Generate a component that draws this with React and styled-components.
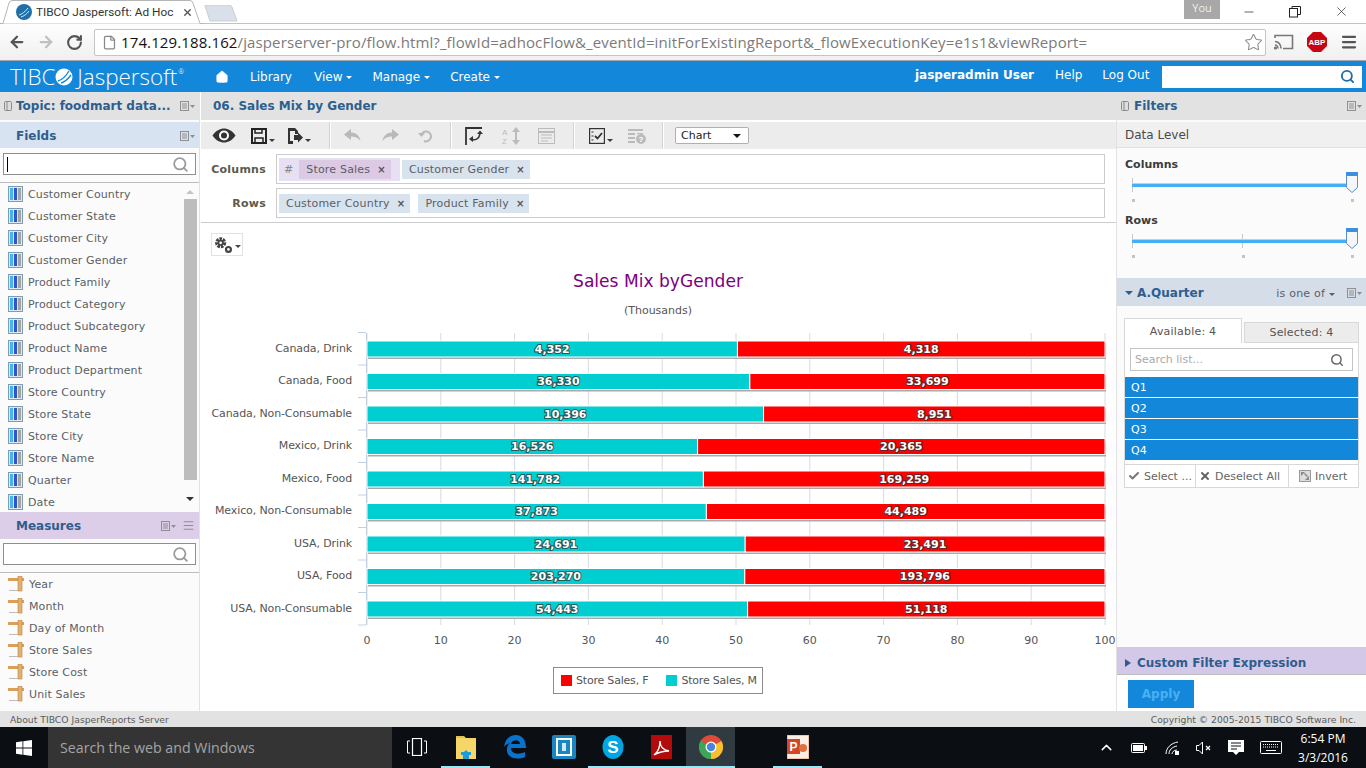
import React from "react";
import styled, { createGlobalStyle } from "styled-components";
import { Search, RotateCw, ArrowLeft, ArrowRight, Star, File, Check, X, Menu, Minus, ChevronUp, Home } from "lucide-react";

const UI = `"DejaVu Sans", Verdana, sans-serif`;
const WIN = `"Open Sans", "Noto Sans", sans-serif`;

const GlobalStyle = createGlobalStyle`
  html, body { margin: 0; padding: 0; background: #fff; overflow: hidden; }
  * { box-sizing: border-box; }
`;

const Page = styled.div`
  width: 1366px;
  height: 768px;
  display: flex;
  flex-direction: column;
  overflow: hidden;
  font-family: ${UI};
  font-size: 11px;
  color: #5a5f66;
`;

/* browser chrome */
const TabStrip = styled.div`
  height: 24px;
  display: flex;
  align-items: flex-start;
  background: #fff;
  border-bottom: 1px solid #c2c2c2;
`;
const Tab = styled.div`
  position: relative;
  width: 204px;
  height: 24px;
  display: flex;
  align-items: center;
  padding-left: 16px;
  font: 11.8px Roboto, sans-serif;
  color: #333;
`;
const TabShape = styled.svg`
  position: absolute;
  left: 0;
  top: 0;
`;
const TabTitle = styled.span`
  position: relative;
  width: 140px;
  margin-left: 4px;
  white-space: nowrap;
`;
const TabClose = styled.span`
  position: relative;
  margin-left: 6px;
  display: flex;
  color: #555;
`;
const NewTab = styled.svg`
  margin-top: 5px;
`;
const WindowArea = styled.div`
  margin-left: auto;
  padding-right: 2px;
  display: flex;
  align-items: flex-start;
`;
const YouBadge = styled.div`
  width: 36px;
  height: 19px;
  background: #a8a8a8;
  color: #eee;
  font: 11px ${WIN};
  text-align: center;
  margin-right: 6px;
`;
const WinButton = styled.div`
  width: 46px;
  height: 23px;
  display: flex;
  align-items: center;
  justify-content: center;
  color: #222;
`;
const BrowserBar = styled.div`
  height: 37px;
  display: flex;
  align-items: center;
  padding: 0 5px 0 2px;
  background: linear-gradient(#fefefe, #f0f0f0);
  border-bottom: 1px solid #a8a8a8;
`;
const NavGlyph = styled.span`
  width: 29px;
  display: flex;
  justify-content: center;
  color: ${(p) => p.color || "#555"};
`;
const UrlBox = styled.div`
  width: 1172px;
  height: 27px;
  margin-left: 5px;
  display: flex;
  align-items: center;
  padding: 0 2px 0 7px;
  background: #fff;
  border: 1px solid #c4c4c4;
  border-radius: 2px;
`;
const UrlText = styled.div`
  flex: 1;
  margin-left: 4px;
  font: 15px ${WIN};
  color: #7b7b7b;
  white-space: nowrap;
  letter-spacing: 0.12px;
  b { font-weight: 400; color: #111; }
`;
const BarTools = styled.div`
  display: flex;
  align-items: center;
  margin-left: 3px;
  flex: 1;
  justify-content: space-between;
  padding: 0 3px 0 5px;
`;
const AbpBadge = styled.div`
  width: 20px;
  height: 20px;
  display: flex;
  align-items: center;
  justify-content: center;
  background: #c8060f;
  clip-path: polygon(30% 0, 70% 0, 100% 30%, 100% 70%, 70% 100%, 30% 100%, 0 70%, 0 30%);
  color: #fff;
  font: bold 8px "Liberation Sans", sans-serif;
`;

/* app nav */
const NavBar = styled.div`
  height: 31px;
  display: flex;
  align-items: center;
  background: #1387d9;
  color: #fff;
  font-size: 12px;
`;
const Logo = styled.div`
  width: 215px;
  padding-left: 10px;
  display: flex;
  align-items: center;
  font: 300 22.4px "Open Sans", sans-serif;
  white-space: nowrap;
  sup {
    font-size: 7px;
    margin: -10px 0 0 1px;
  }
`;
const NavLink = styled.span`
  margin-left: ${(p) => p.$gap || 0}px;
  margin-bottom: ${(p) => (p.$raised ? 3 : 0)}px;
  font-weight: ${(p) => (p.$bold ? 700 : 400)};
  display: flex;
  align-items: center;
  white-space: nowrap;
`;
const Caret = styled.i`
  display: inline-block;
  margin: ${(p) => p.$margin || "2px 0 0 4px"};
  border-left: ${(p) => p.$size || 3}px solid transparent;
  border-right: ${(p) => p.$size || 3}px solid transparent;
  border-top: ${(p) => p.$size || 3}px solid ${(p) => p.$color || "currentColor"};
`;
const SideCaret = styled.i`
  margin-right: 6px;
  border-top: 4px solid transparent;
  border-bottom: 4px solid transparent;
  border-left: 6px solid #2e5e8e;
`;
const NavSearch = styled.div`
  width: 200px;
  height: 22px;
  margin-left: 13px;
  background: #fff;
  display: flex;
  align-items: center;
  justify-content: flex-end;
  padding-right: 7px;
  color: #1b6ea8;
`;

/* three columns */
const Main = styled.div`
  flex: 1;
  min-height: 0;
  display: flex;
  background: #fff;
`;
const LeftPanel = styled.div`
  width: 200px;
  display: flex;
  flex-direction: column;
  background: #fbfbfb;
  border-right: 1px solid #e2e2e2;
`;
const CenterPanel = styled.div`
  width: 916px;
  display: flex;
  flex-direction: column;
  border-left: 1px solid #fff;
`;
const RightPanel = styled.div`
  width: 250px;
  display: flex;
  flex-direction: column;
  background: #fbfbfb;
  border-left: 1px solid #e2e2e2;
`;
const PanelHead = styled.div`
  height: ${(p) => p.$h || 28}px;
  flex: none;
  display: flex;
  align-items: center;
  padding: ${(p) => p.$drop || 0}px ${(p) => p.$right ?? 4}px 0 ${(p) => p.$left ?? 4}px;
  background: ${(p) => p.$bg || "#e2e2e2"};
  margin-top: ${(p) => p.$top || 0}px;
  font-weight: 700;
  font-size: 12px;
  color: #2e5e8e;
  white-space: nowrap;
`;
const HeadTitle = styled.span`
  flex: 1;
  margin-left: ${(p) => p.$left || 0}px;
`;
const SearchInput = styled.div`
  height: 22px;
  margin: ${(p) => p.$margin};
  display: flex;
  align-items: center;
  justify-content: space-between;
  padding: 0 6px 0 3px;
  background: #fff;
  border: 1px solid #8f8f8f;
  color: #9a9a9a;
`;
const TextCursor = styled.i`
  width: 1px;
  height: 15px;
  background: #000;
`;
const FieldsBody = styled.div`
  height: 330px;
  flex: none;
  display: flex;
  border-top: 1px solid #bdbdbd;
  margin-top: 7px;
  overflow: hidden;
`;
const FieldList = styled.div`
  flex: 1;
`;
const FieldRow = styled.div`
  height: 22px;
  display: flex;
  align-items: center;
  gap: 5px;
  padding-left: 8px;
  white-space: nowrap;
  letter-spacing: 0.13px;
`;
const Scrollbar = styled.div`
  width: 14px;
  margin-right: 2px;
  display: flex;
  flex-direction: column;
  align-items: center;
`;
const ScrollArrow = styled.i`
  flex: none;
  margin: ${(p) => p.$margin};
  border-left: 4px solid transparent;
  border-right: 4px solid transparent;
  ${(p) => (p.$up ? "border-bottom: 4px solid #c4c4c4;" : "border-top: 4px solid #333;")}
`;
const ScrollThumb = styled.div`
  width: 13px;
  height: 281px;
  background: #bdbdbd;
`;
const MeasureBody = styled.div`
  flex: 1;
  min-height: 0;
  margin-top: 7px;
  border-top: 1px solid #bdbdbd;
`;
const SmallMenu = styled(Menu)`
  margin-left: 6px;
`;

/* center toolbar and pivot rows */
const Toolbar = styled.div`
  height: 27px;
  flex: none;
  margin-top: 2px;
  display: flex;
  align-items: center;
  background: #ececec;
  color: #333;
`;
const ToolBtn = styled.span`
  width: ${(p) => p.$w}px;
  flex: none;
  display: flex;
  align-items: center;
  justify-content: center;
  color: ${(p) => (p.$off ? "#b9b9b9" : "#3a3a3a")};
`;
const ToolSep = styled.i`
  width: 1px;
  height: 27px;
  flex: none;
  background: #fff;
  box-shadow: -1px 0 0 #d4d4d4;
`;
const ChartSelect = styled.div`
  width: 74px;
  height: 17px;
  margin-left: 11px;
  display: flex;
  align-items: center;
  justify-content: space-between;
  padding: 0 7px 0 5px;
  background: #fff;
  border: 1px solid #b0b0b0;
  border-radius: 2px;
  color: #222;
  font-size: 11px;
`;
const PivotRow = styled.div`
  display: flex;
  align-items: center;
  height: 30px;
  margin-top: ${(p) => p.$top}px;
`;
const PivotLabel = styled.div`
  width: 65px;
  text-align: right;
  font-weight: 700;
  color: #5d5b4c;
  font-size: 11px;
  letter-spacing: 0.25px;
`;
const PivotBox = styled.div`
  width: 829px;
  height: 30px;
  margin-left: 10px;
  display: flex;
  align-items: center;
  gap: 2px;
  padding-left: 2px;
  border: 1px solid #ccc;
`;
const MeasureGroup = styled.div`
  height: 23px;
  display: flex;
  align-items: center;
  padding: 0 9px 0 5px;
  background: #e6e0f2;
  color: #888;
  font-style: italic;
`;
const Pill = styled.div`
  height: 19px;
  margin-left: ${(p) => p.$left || 0}px;
  margin-right: ${(p) => p.$right || 0}px;
  display: flex;
  align-items: center;
  gap: 7px;
  padding: 0 5px 0 7px;
  font-style: normal;
  letter-spacing: 0.2px;
  background: ${(p) => (p.$inner ? "#dcc9e4" : "#d8e3ee")};
  color: #5a5f66;
  white-space: nowrap;
`;
const PillX = styled.b`
  font-size: 10px;
  color: #555;
`;
const CanvasArea = styled.div`
  flex: 1;
  min-height: 0;
  margin-top: 4px;
  border-top: 1px solid #ccc;
  display: flex;
  flex-direction: column;
`;
const GearBtn = styled.div`
  width: 32px;
  height: 23px;
  margin: 10px 0 6px 10px;
  display: flex;
  align-items: center;
  justify-content: center;
  border: 1px solid #e2e2e2;
  color: #444;
`;
const ChartSvg = styled.svg`
  display: block;
  font-family: ${UI};
`;
const ChartTitle = styled.text`
  fill: #7c007c;
  font-size: 17.1px;
  text-anchor: middle;
`;
const ChartSub = styled.text`
  fill: #555;
  font-size: 11px;
  text-anchor: middle;
`;
const CatLabel = styled.text`
  fill: #555;
  font-size: 11px;
  letter-spacing: -0.12px;
  text-anchor: end;
`;
const AxisLabel = styled.text`
  fill: #555;
  font-size: 11px;
  text-anchor: middle;
`;
const BarValue = styled.text`
  fill: #fff;
  font-size: 11px;
  font-weight: 700;
  text-anchor: middle;
  stroke: #333;
  stroke-width: 2.2px;
  stroke-opacity: 0.75;
  paint-order: stroke;
`;
const Legend = styled.div`
  width: 210px;
  height: 27px;
  margin: 10px 0 0 352px;
  display: flex;
  align-items: center;
  gap: 18px;
  padding-left: 7px;
  border: 1px solid #8c8c8c;
  color: #555;
  letter-spacing: -0.2px;
`;
const LegendItem = styled.div`
  display: flex;
  align-items: center;
  gap: 4px;
  white-space: nowrap;
  &::before {
    content: "";
    width: 11px;
    height: 11px;
    background: ${(p) => p.$color};
  }
`;

/* filters */
const DataLevel = styled.div`
  height: 26px;
  flex: none;
  display: flex;
  align-items: center;
  margin-top: 2px;
  padding-left: 8px;
  background: #f0f0f0;
  border-bottom: 1px solid #e0e0e0;
  font-size: 12px;
  color: #4a4a4a;
`;
const SliderLabel = styled.div`
  margin: ${(p) => p.$top}px 0 0 8px;
  font-weight: 700;
  color: #3c3c3c;
  font-size: 11px;
`;
const SliderTrack = styled.div`
  position: relative;
  height: 27px;
  margin: 7px 0 0 15px;
  width: 220px;
`;
const TrackLine = styled.div`
  position: absolute;
  left: 0;
  right: 0;
  top: 5px;
  height: 4px;
  background: #45aef5;
  border-top: 1px solid #a6d8f8;
`;
const TickLine = styled.i`
  position: absolute;
  left: ${(p) => p.$x}px;
  top: 0;
  width: 1px;
  height: 14px;
  background: #c8c8c8;
`;
const TickDot = styled.i`
  position: absolute;
  left: ${(p) => p.$x}px;
  top: 21px;
  width: 3px;
  height: 3px;
  background: #c4c4c4;
`;
const SliderThumb = styled.span`
  position: absolute;
  left: 214px;
  top: -6px;
  display: flex;
`;
const IsOneOf = styled.span`
  display: flex;
  align-items: center;
  font-weight: 400;
  font-size: 11px;
  letter-spacing: 0.2px;
  color: #5a5f66;
  margin-right: 12px;
`;
const PickBox = styled.div`
  margin: 12px 7px 0 7px;
  display: flex;
  flex-direction: column;
`;
const TabRow = styled.div`
  display: flex;
  align-items: flex-end;
  height: 25px;
`;
const PickTab = styled.div`
  height: ${(p) => (p.$active ? 25 : 21)}px;
  width: ${(p) => (p.$active ? 118 : 115)}px;
  margin-left: ${(p) => (p.$active ? 0 : 2)}px;
  display: flex;
  align-items: center;
  justify-content: center;
  border: 1px solid #d8d8d8;
  border-bottom: ${(p) => (p.$active ? "none" : "1px solid #d8d8d8")};
  background: ${(p) => (p.$active ? "#fff" : "#ececec")};
  color: #555;
  letter-spacing: 0.2px;
`;
const PickBody = styled.div`
  background: #fff;
  border: 1px solid #d8d8d8;
  border-top: none;
`;
const PickSearch = styled.div`
  height: 23px;
  margin: 5px 5px 6px 5px;
  display: flex;
  align-items: center;
  justify-content: space-between;
  padding: 0 8px 0 4px;
  border: 1px solid #c4c4c4;
  color: #aaa;
`;
const QuarterItem = styled.div`
  height: 20px;
  margin-bottom: 1px;
  display: flex;
  align-items: center;
  padding-left: 6px;
  background: #1387d9;
  color: #fff;
`;
const PickActions = styled.div`
  height: 23px;
  margin-top: 4px;
  display: flex;
  border-top: 1px solid #d8d8d8;
`;
const PickAction = styled.div`
  width: ${(p) => p.$w}px;
  display: flex;
  align-items: center;
  gap: 4px;
  padding-left: ${(p) => p.$pad || 3}px;
  white-space: nowrap;
  overflow: hidden;
  color: #666;
  font-size: 11px;
  & + & { border-left: 1px solid #d8d8d8; }
`;
const Spacer = styled.div`
  flex: 1;
`;
const CustomHead = styled(PanelHead)`
  border-bottom: 1px solid #bdbdbd;
`;
const ApplyRow = styled.div`
  height: 36px;
  flex: none;
  padding: 5px 0 0 11px;
  background: #fff;
`;
const ApplyBtn = styled.div`
  width: 66px;
  height: 28px;
  display: flex;
  align-items: center;
  justify-content: center;
  background: #1387d9;
  color: #4ab0f2;
  font-weight: 700;
  font-size: 12px;
`;

/* footer and taskbar */
const Footer = styled.div`
  height: 16px;
  flex: none;
  display: flex;
  align-items: center;
  justify-content: space-between;
  padding: 0 10px;
  background: #e2e2e2;
  font-size: 9.25px;
  color: #5a5a5a;
`;
const Taskbar = styled.div`
  height: 41px;
  flex: none;
  display: flex;
  align-items: stretch;
  background: #0b0f14;
  color: #fff;
`;
const StartBtn = styled.div`
  width: 48px;
  display: flex;
  align-items: center;
  justify-content: center;
`;
const TaskSearch = styled.div`
  width: 344px;
  display: flex;
  align-items: center;
  padding-left: 12px;
  background: #343434;
  color: #a4a4a4;
  font: 14.2px ${WIN};
`;
const TaskItem = styled.div`
  width: ${(p) => p.$w || 49}px;
  margin-left: ${(p) => p.$left || 0}px;
  display: flex;
  align-items: center;
  justify-content: center;
  background: ${(p) => (p.$active ? "#2f3b40" : "transparent")};
  border-bottom: 2px solid ${(p) => (p.$open ? "#9be6f7" : "transparent")};
`;
const Tray = styled.div`
  margin-left: auto;
  display: flex;
  align-items: center;
`;
const TrayIcon = styled.span`
  width: ${(p) => p.$w}px;
  display: flex;
  justify-content: center;
`;
const Clock = styled.div`
  width: 62px;
  margin: 0 12px 0 4px;
  text-align: center;
  font: 12px/19px ${WIN};
`;

/* drawn icons */
const FieldIcon = () => (
  <svg width="15" height="16" viewBox="0 0 15 16">
    <rect x="0.5" y="0.5" width="14" height="15" fill="#dfe8f0" stroke="#7d9db5" />
    <rect x="2" y="2" width="3" height="12" fill="#45b4f5" />
    <rect x="6" y="2" width="3" height="12" fill="#2f55c9" />
    <rect x="10" y="2" width="3" height="12" fill="#a5a5a5" />
  </svg>
);
const MeasureIcon = () => (
  <svg width="16" height="16" viewBox="0 0 16 16">
    <rect x="0" y="2" width="16" height="3" fill="#d9a05a" />
    <rect x="10" y="0" width="4" height="15" fill="#e2b06f" stroke="#b98443" strokeWidth="0.6" />
    <rect x="1" y="14" width="9" height="1" fill="#bbb" />
  </svg>
);
const PanelMenu = () => (
  <svg width="15" height="10" viewBox="0 0 15 10" fill="none" stroke="#8f8f8f">
    <rect x="0.5" y="0.5" width="8" height="9" />
    <path d="M2 3h5M2 5h5M2 7h5" />
    <path d="M10 4h5l-2.5 3z" fill="#8f8f8f" stroke="none" />
  </svg>
);
const PinIcon = () => (
  <svg width="8" height="10" viewBox="0 0 8 10" fill="#ddd" stroke="#8a8a8a">
    <rect x="0.5" y="0.5" width="7" height="9" rx="1" />
    <path d="M3 1v8" />
  </svg>
);
const EyeIcon = () => (
  <svg width="24" height="15" viewBox="0 0 24 15">
    <path d="M0.5 7.5C4 2.5 8 0.5 12 0.5s8 2 11.5 7c-3.500 5-7.500 7-11.500 7S4 12.500 0.500 7.500z" fill="#333" />
    <circle cx="12" cy="7.500" r="5" fill="#fff" />
    <circle cx="12" cy="7.500" r="3" fill="#333" />
  </svg>
);
const SaveIcon = () => (
  <svg width="16" height="16" viewBox="0 0 16 16" fill="none" stroke="#222" strokeWidth="2">
    <rect x="1" y="1" width="14" height="14" />
    <path d="M4 1v4h7V1M4 15v-5h8v5" strokeWidth="1.500" />
  </svg>
);
const ExportIcon = () => (
  <svg width="16" height="16" viewBox="0 0 16 16" fill="#333">
    <path d="M1 0h7l3 3v3H8V3H3v10h3v3H1z" />
    <path d="M7 7h4V4.500L16 9.500 11 14.500V12H7z" />
  </svg>
);
const UndoIcon = ({ flip }) => (
  <svg width="18" height="13" viewBox="0 0 18 13" fill="#b9b9b9" transform={flip ? "scale(-1 1)" : undefined}>
    <path d="M7 0L0 5.500 7 11V7.500c4 0 7 1 9.500 4.500C15.500 6.500 12 3.500 7 3.500z" />
  </svg>
);
const UndoAllIcon = () => (
  <svg width="14" height="14" viewBox="0 0 14 14" fill="none" stroke="#b9b9b9" strokeWidth="2">
    <path d="M3 7a5 5 0 1 1 3 5" />
    <path d="M0 4l3.500 4L7 4z" fill="#b9b9b9" stroke="none" />
  </svg>
);
const PivotIcon = () => (
  <svg width="20" height="20" viewBox="0 0 20 20" fill="none" stroke="#333" strokeWidth="1.800">
    <path d="M1 19V2h16" />
    <path d="M6 13c4 2 8 0 9-5" strokeWidth="1.500" />
    <path d="M12 8h6l-3-3.500zM8 10v6l-4-3z" fill="#333" stroke="none" />
  </svg>
);
const SortIcon = () => (
  <svg width="20" height="18" viewBox="0 0 20 18" fill="#bbb">
    <text x="0" y="8" fontSize="8" fontFamily="Liberation Sans">A</text>
    <text x="0" y="17" fontSize="8" fontFamily="Liberation Sans">Z</text>
    <path d="M14 0l4 5h-3v8h3l-4 5-4-5h3V5h-3z" />
  </svg>
);
const TableIcon = () => (
  <svg width="17" height="16" viewBox="0 0 17 16" fill="none" stroke="#bbb">
    <rect x="0.500" y="0.500" width="16" height="15" />
    <path d="M1 4h15" strokeWidth="2" />
    <path d="M3 7h11M3 10h11M3 13h7" />
  </svg>
);
const ChecklistIcon = () => (
  <svg width="16" height="16" viewBox="0 0 16 16" fill="none" stroke="#333">
    <rect x="0.500" y="0.500" width="15" height="15" strokeWidth="1.400" />
    <path d="M2.500 4h2M2.500 8h2M2.500 12h2" />
    <path d="M6 8l2.500 2.500L13 5" strokeWidth="1.800" />
  </svg>
);
const QueryIcon = () => (
  <svg width="19" height="16" viewBox="0 0 19 16">
    <path d="M0 1h15v2H0zM0 5h7v2H0zM9 5h6v1H9zM0 9h7v2H0zM0 13h7v2H0z" fill="#bbb" />
    <circle cx="13" cy="11" r="5" fill="#bbb" />
    <text x="13" y="14" fontSize="8" fontWeight="700" textAnchor="middle" fill="#fff" fontFamily="Liberation Sans">?</text>
  </svg>
);
const GearsIcon = () => (
  <svg width="20" height="18" viewBox="0 0 18 16" fill="none" stroke="#444">
    <circle cx="6" cy="6" r="3.500" strokeWidth="3" strokeDasharray="2.200 0.800" />
    <circle cx="6" cy="6" r="2" strokeWidth="1.500" />
    <circle cx="13" cy="12" r="2.200" strokeWidth="2" />
  </svg>
);
const TibcoBall = () => (
  <svg width="18" height="18" viewBox="0 0 18 18">
    <circle cx="9" cy="9" r="8.500" fill="#fff" />
    <path d="M3 13C7 12 11 8 14 3M6 15c4-1 7-4 10-8" stroke="#1387d9" strokeWidth="1.300" fill="none" />
  </svg>
);
const LogoMark = styled.span`
  display: flex;
  margin: 0 4px 0 0;
`;
const TibcoFavicon = () => (
  <svg width="16" height="16" viewBox="0 0 16 16">
    <circle cx="8" cy="8" r="8" fill="#1f6fa8" />
    <path d="M3 11c3-1 6-3 9-7M5 13c3-1 6-3 8-6" stroke="#d6ecfa" fill="none" />
  </svg>
);
const FaviconWrap = styled.span`
  position: relative;
  display: flex;
`;
const CastIcon = () => (
  <svg width="20" height="16" viewBox="0 0 20 16" fill="none" stroke="#777" strokeWidth="1.600">
    <path d="M1 4V1.500h17.500v13H9" />
    <path d="M1 7.500c3.500 0 6 3 6 7M1 11c1.500 0 3 1.500 3 3.500" />
    <circle cx="1.500" cy="14" r="0.800" fill="#777" />
  </svg>
);
const ThumbIcon = () => (
  <svg width="12" height="21" viewBox="0 0 12 21">
    <path d="M0.500 0.500h11v15L6 20.500 0.500 15.500z" fill="#f4f6fa" stroke="#5b8fd6" />
    <rect x="0" y="0" width="12" height="4" fill="#3f8fdf" />
  </svg>
);
const WinLogo = () => (
  <svg width="16" height="16" viewBox="0 0 16 16" fill="#fff">
    <path d="M0 2.200l6.500-.9v6.300H0zM7.300 1.200L16 0v7.600H7.300zM0 8.400h6.500v6.300L0 13.800zM7.300 8.400H16V16l-8.700-1.200z" />
  </svg>
);
const TaskViewIcon = () => (
  <svg width="20" height="18" viewBox="0 0 20 18" fill="none" stroke="#fff">
    <rect x="5.500" y="0.500" width="9" height="17" strokeWidth="1.200" />
    <path d="M3 3H0.500v12H3M17 3h2.500v12H17" />
  </svg>
);
const ExplorerIcon = () => (
  <svg width="22" height="24" viewBox="0 0 22 24">
    <path d="M1 1h8l2 2h-10z" fill="#e7c04d" />
    <rect x="1" y="3" width="20" height="21" fill="#f6d569" />
    <path d="M8 24v-6l3-3 3 3v6z" fill="#1e9bd8" />
    <rect x="6" y="17" width="10" height="3" fill="#1e9bd8" />
  </svg>
);
const EdgeIcon = () => (
  <svg width="22" height="24" viewBox="0 0 22 24" fill="#0b72c9">
    <path d="M0 12C1 4 6 0 12 0c6 0 10 5 10 13H7c0 6 7 7 14 4v5c-7 3-17 2-18-6-.5-3 .5-6 3-8-3 1-5 2-6 4zm7-3h9c0-5-8-5-9 0z" />
  </svg>
);
const BracketApp = () => (
  <svg width="24" height="24" viewBox="0 0 24 24">
    <rect width="24" height="24" rx="2" fill="#1986c4" />
    <path d="M5 4h14v16H5z" fill="none" stroke="#fff" strokeWidth="2" />
    <rect x="10" y="8" width="4" height="8" fill="#cfe9f7" />
  </svg>
);
const SkypeIcon = () => (
  <svg width="22" height="24" viewBox="0 0 22 24">
    <ellipse cx="11" cy="12" rx="10.500" ry="12" fill="#00a6e4" />
    <text x="11" y="18" fontSize="17" fontWeight="700" textAnchor="middle" fill="#fff" fontFamily="Liberation Sans">S</text>
  </svg>
);
const PdfIcon = () => (
  <svg width="21" height="24" viewBox="0 0 21 24">
    <rect width="21" height="24" fill="#b30b0b" />
    <path d="M3 20c4-3 6-9 6-14 0 5 3 9 9 10-5 0-10 1-15 4z" fill="none" stroke="#fff" strokeWidth="1.400" />
  </svg>
);
const ChromeIcon = () => (
  <svg width="24" height="24" viewBox="0 0 24 24">
    <circle cx="12" cy="12" r="12" fill="#dd4b39" />
    <path d="M12 12L1.600 6A12 12 0 0 0 12 24l5-10z" fill="#3aa757" />
    <path d="M12 12l10.400-6A12 12 0 0 1 12 24z" fill="#f6c12c" />
    <circle cx="12" cy="12" r="5.500" fill="#fff" />
    <circle cx="12" cy="12" r="4.200" fill="#4a85dc" />
  </svg>
);
const PptIcon = () => (
  <svg width="22" height="24" viewBox="0 0 22 24">
    <rect width="22" height="24" fill="#fbeee4" stroke="#e0a070" />
    <rect x="0" y="4" width="13" height="15" fill="#d24726" />
    <text x="6.500" y="16" fontSize="12" fontWeight="700" textAnchor="middle" fill="#fff" fontFamily="Liberation Sans">P</text>
    <circle cx="16" cy="13" r="4" fill="#e07040" />
  </svg>
);
const InvertIcon = () => (
  <svg width="12" height="12" viewBox="0 0 12 12" fill="#888">
    <rect x="0.500" y="0.500" width="11" height="11" fill="#ddd" stroke="#999" />
    <path d="M2 2h4L2 6zM10 10H6l4-4zM6 3l3 3-1 1-3-3z" />
  </svg>
);
const BatteryIcon = () => (
  <svg width="16" height="10" viewBox="0 0 16 10">
    <rect x="0.500" y="0.500" width="13" height="9" rx="1" fill="none" stroke="#fff" />
    <rect x="2" y="2" width="10" height="6" fill="#fff" />
    <rect x="14" y="3" width="2" height="4" fill="#fff" />
  </svg>
);
const WifiIcon = () => (
  <svg width="14" height="14" viewBox="0 0 14 14" fill="none" stroke="#fff">
    <path d="M1 13C1 7 6 2 13 1M4 13c0-4 3-7 8-8M7 13c0-2 2-4 5-4" />
    <rect x="10" y="10" width="4" height="4" fill="#fff" stroke="none" />
  </svg>
);
const MuteIcon = () => (
  <svg width="15" height="14" viewBox="0 0 15 14" fill="none" stroke="#fff">
    <path d="M0.500 4.500h2.500L6.500 1v12L3 9.500H0.500z" />
    <path d="M10 5l4 4M14 5l-4 4" strokeWidth="1.200" />
  </svg>
);
const NoticeIcon = () => (
  <svg width="16" height="16" viewBox="0 0 16 16">
    <path d="M0 0h16v12h-5l-3 3-3-3H0z" fill="#fff" />
    <path d="M3 3h10M3 6h10M3 9h6" stroke="#0b0f14" />
  </svg>
);
const KeyboardIcon = () => (
  <svg width="22" height="13" viewBox="0 0 22 13" fill="none" stroke="#fff">
    <rect x="0.500" y="0.500" width="21" height="12" rx="1" />
    <path d="M3 3.500h16M3 6h16" strokeDasharray="1 1" />
    <path d="M6 9.500h10" />
  </svg>
);

const fields = ["Customer Country", "Customer State", "Customer City", "Customer Gender", "Product Family", "Product Category", "Product Subcategory", "Product Name", "Product Department", "Store Country", "Store State", "Store City", "Store Name", "Quarter", "Date"];
const measures = ["Year", "Month", "Day of Month", "Store Sales", "Store Cost", "Unit Sales"];
const rows = [
  ["Canada, Drink", 4352, 4318],
  ["Canada, Food", 36330, 33699],
  ["Canada, Non-Consumable", 10396, 8951],
  ["Mexico, Drink", 16526, 20365],
  ["Mexico, Food", 141782, 169259],
  ["Mexico, Non-Consumable", 37873, 44489],
  ["USA, Drink", 24691, 23491],
  ["USA, Food", 203270, 193796],
  ["USA, Non-Consumable", 54443, 51118],
];

const AXIS_X = 367;
const AXIS_W = 738;

const SalesChart = () => (
  <ChartSvg width="915" height="395" viewBox="201 262 915 395">
    <ChartTitle x="658" y="287">Sales Mix byGender</ChartTitle>
    <ChartSub x="658" y="314">(Thousands)</ChartSub>
    {Array.from({ length: 11 }, (_, i) => {
      const x = AXIS_X + (AXIS_W * i) / 10;
      return (
        <g key={i}>
          <line x1={x} x2={x} y1="333" y2="625" stroke="#d8dbe0" />
          <AxisLabel x={x} y="644">{i * 10}</AxisLabel>
        </g>
      );
    })}
    <line x1="366.500" x2="366.500" y1="333" y2="625" stroke="#c0d0e0" />
    {rows.map((_, i) => (
      <line key={i} x1="358" x2="366" y1={332.500 + i * 32.500} y2={332.500 + i * 32.500} stroke="#c0d0e0" />
    ))}
    <line x1="358" x2="366" y1="625" y2="625" stroke="#c0d0e0" />
    {rows.map(([name, m, f], i) => {
      const y = 341 + i * 32.500;
      const split = (AXIS_W * m) / (m + f);
      return (
        <g key={name}>
          <CatLabel x="352" y={y + 10.500}>{name}</CatLabel>
          <rect x={AXIS_X + 1} y={y + 2} width={AXIS_W} height="16" fill="#aaa" />
          <rect x={AXIS_X} y={y} width={split} height="16" fill="#00ced1" stroke="#fff" />
          <rect x={AXIS_X + split} y={y} width={AXIS_W - split} height="16" fill="#ff0000" stroke="#fff" />
          <BarValue x={AXIS_X + split / 2} y={y + 11.500}>{m.toLocaleString("en-US")}</BarValue>
          <BarValue x={AXIS_X + split + (AXIS_W - split) / 2} y={y + 11.500}>{f.toLocaleString("en-US")}</BarValue>
        </g>
      );
    })}
  </ChartSvg>
);

const TickSlider = ({ mid }) => (
  <SliderTrack>
    <TickLine $x={0} />
    {mid && <TickLine $x={110} />}
    <TrackLine />
    <TickDot $x={0} />
    {mid && <TickDot $x={110} />}
    <TickDot $x={219} />
    <SliderThumb><ThumbIcon /></SliderThumb>
  </SliderTrack>
);

export default function App() {
  return (
    <Page>
      <GlobalStyle />
      <TabStrip>
        <Tab>
          <TabShape width="204" height="24" viewBox="0 0 204 24" fill="#fff" stroke="#b5b5b5">
            <path d="M0 23.500h3L9 3q1-2.500 3-2.500h178q2 0 3 2.500l7 20.500h4" />
          </TabShape>
          <FaviconWrap><TibcoFavicon /></FaviconWrap>
          <TabTitle>TIBCO Jaspersoft: Ad Hoc</TabTitle>
          <TabClose><X size={11} strokeWidth={3} /></TabClose>
        </Tab>
        <NewTab width="34" height="18" viewBox="0 0 34 18">
          <path d="M1 0h24q2 0 3 2l5 14H6L1 1z" fill="#d9e0ea" stroke="#c7ced8" />
        </NewTab>
        <WindowArea>
          <YouBadge>You</YouBadge>
          <WinButton><Minus size={14} strokeWidth={1.2} /></WinButton>
          <WinButton>
            <svg width="12" height="12" viewBox="0 0 12 12" fill="none" stroke="#222">
              <rect x="0.500" y="2.500" width="8" height="8.500" />
              <path d="M3 2.500V0.500h8.500v8H9" />
            </svg>
          </WinButton>
          <WinButton><X size={15} strokeWidth={1.1} /></WinButton>
        </WindowArea>
      </TabStrip>
      <BrowserBar>
        <NavGlyph><ArrowLeft size={18} strokeWidth={3} /></NavGlyph>
        <NavGlyph color="#c0c0c0"><ArrowRight size={18} strokeWidth={3} /></NavGlyph>
        <NavGlyph><RotateCw size={17} strokeWidth={3} /></NavGlyph>
        <UrlBox>
          <File size={15} color="#888" />
          <UrlText>
            <b>174.129.188.162</b>/jasperserver-pro/flow.html?_flowId=adhocFlow&amp;_eventId=initForExistingReport&amp;_flowExecutionKey=e1s1&amp;viewReport=
          </UrlText>
          <Star size={19} color="#8a8a8a" strokeWidth={1.300} />
        </UrlBox>
        <BarTools>
          <CastIcon />
          <AbpBadge>ABP</AbpBadge>
          <Menu size={18} color="#555" strokeWidth={3} />
        </BarTools>
      </BrowserBar>

      <NavBar>
        <Logo>TIBC<LogoMark><TibcoBall /></LogoMark>Jaspersoft<sup>®</sup></Logo>
        <Home size={14} fill="#fff" strokeWidth={1} />
        <NavLink $gap={21}>Library</NavLink>
        <NavLink $gap={22}>View<Caret /></NavLink>
        <NavLink $gap={20}>Manage<Caret /></NavLink>
        <NavLink $gap={20}>Create<Caret /></NavLink>
        <NavLink $gap={415} $bold $raised>jasperadmin User</NavLink>
        <NavLink $gap={21} $raised>Help</NavLink>
        <NavLink $gap={20} $raised>Log Out</NavLink>
        <NavSearch><Search size={15} strokeWidth={3} /></NavSearch>
      </NavBar>

      <Main>
        <LeftPanel>
          <PanelHead>
            <PinIcon />
            <HeadTitle $left={4}>Topic: foodmart data...</HeadTitle>
            <PanelMenu />
          </PanelHead>
          <PanelHead $h={26} $top={2} $left={16} $drop={2} $bg="#d7e3f0">
            <HeadTitle>Fields</HeadTitle>
            <PanelMenu />
          </PanelHead>
          <SearchInput $margin="5px 3px 0 3px">
            <TextCursor />
            <Search size={17} strokeWidth={2.500} />
          </SearchInput>
          <FieldsBody>
            <FieldList>
              {fields.map((f) => (
                <FieldRow key={f}><FieldIcon />{f}</FieldRow>
              ))}
            </FieldList>
            <Scrollbar>
              <ScrollArrow $up $margin="7px 0 5px" />
              <ScrollThumb />
              <ScrollArrow $margin="17px 0 0" />
            </Scrollbar>
          </FieldsBody>
          <PanelHead $h={27} $left={16} $bg="#dccde8">
            <HeadTitle>Measures</HeadTitle>
            <PanelMenu />
            <SmallMenu size={13} color="#8f8f8f" />
          </PanelHead>
          <SearchInput $margin="4px 3px 0 3px">
            <span />
            <Search size={17} strokeWidth={2.500} />
          </SearchInput>
          <MeasureBody>
            {measures.map((m) => (
              <FieldRow key={m}><MeasureIcon />{m}</FieldRow>
            ))}
          </MeasureBody>
        </LeftPanel>

        <CenterPanel>
          <PanelHead $left={12}>06. Sales Mix by Gender</PanelHead>
          <Toolbar>
            <ToolBtn $w={46}><EyeIcon /></ToolBtn>
            <ToolBtn $w={31}><SaveIcon /><Caret $margin="9px 0 0 2px" /></ToolBtn>
            <ToolBtn $w={42}><ExportIcon /><Caret $margin="9px 0 0 2px" /></ToolBtn>
            <ToolBtn $w={10} />
            <ToolSep />
            <ToolBtn $w={44} $off><UndoIcon /></ToolBtn>
            <ToolBtn $w={30} $off><UndoIcon flip /></ToolBtn>
            <ToolBtn $w={40} $off><UndoAllIcon /></ToolBtn>
            <ToolBtn $w={6} />
            <ToolSep />
            <ToolBtn $w={46}><PivotIcon /></ToolBtn>
            <ToolBtn $w={28} $off><SortIcon /></ToolBtn>
            <ToolBtn $w={40} $off><TableIcon /></ToolBtn>
            <ToolBtn $w={8} />
            <ToolSep />
            <ToolBtn $w={52}><ChecklistIcon /><Caret $margin="9px 0 0 2px" /></ToolBtn>
            <ToolBtn $w={20} $off><QueryIcon /></ToolBtn>
            <ToolBtn $w={16} />
            <ToolSep />
            <ChartSelect>Chart<Caret $size={4} $color="#111" $margin="0" /></ChartSelect>
          </Toolbar>
          <PivotRow $top={5}>
            <PivotLabel>Columns</PivotLabel>
            <PivotBox>
              <MeasureGroup>
                #
                <Pill $inner $left={6}>Store Sales<PillX>×</PillX></Pill>
              </MeasureGroup>
              <Pill>Customer Gender<PillX>×</PillX></Pill>
            </PivotBox>
          </PivotRow>
          <PivotRow $top={4}>
            <PivotLabel>Rows</PivotLabel>
            <PivotBox>
              <Pill $right={6}>Customer Country<PillX>×</PillX></Pill>
              <Pill>Product Family<PillX>×</PillX></Pill>
            </PivotBox>
          </PivotRow>
          <CanvasArea>
            <GearBtn><GearsIcon /><Caret $margin="3px 0 0 1px" /></GearBtn>
            <SalesChart />
            <Legend>
              <LegendItem $color="#ff0000">Store Sales, F</LegendItem>
              <LegendItem $color="#00ced1">Store Sales, M</LegendItem>
            </Legend>
          </CanvasArea>
        </CenterPanel>

        <RightPanel>
          <PanelHead>
            <PinIcon />
            <HeadTitle $left={5}>Filters</HeadTitle>
            <PanelMenu />
          </PanelHead>
          <DataLevel>Data Level</DataLevel>
          <SliderLabel $top={10}>Columns</SliderLabel>
          <TickSlider />
          <SliderLabel $top={9}>Rows</SliderLabel>
          <TickSlider mid />
          <PanelHead $top={17} $left={8} $drop={2} $bg="#d5dde9">
            <Caret $size={4} $color="#2e5e8e" $margin="0 4px 0 0" />
            <HeadTitle>A.Quarter</HeadTitle>
            <IsOneOf>is one of<Caret /></IsOneOf>
            <PanelMenu />
          </PanelHead>
          <PickBox>
            <TabRow>
              <PickTab $active>Available: 4</PickTab>
              <PickTab>Selected: 4</PickTab>
            </TabRow>
            <PickBody>
              <PickSearch>Search list...<Search size={14} color="#666" strokeWidth={2.500} /></PickSearch>
              {["Q1", "Q2", "Q3", "Q4"].map((q) => (
                <QuarterItem key={q}>{q}</QuarterItem>
              ))}
              <PickActions>
                <PickAction $w={70}><Check size={12} strokeWidth={4} color="#777" />Select ...</PickAction>
                <PickAction $w={93}><X size={12} strokeWidth={4} color="#666" />Deselect All</PickAction>
                <PickAction $w={70} $pad={10}><InvertIcon />Invert</PickAction>
              </PickActions>
            </PickBody>
          </PickBox>
          <Spacer />
          <CustomHead $left={8} $drop={4} $bg="#d4c8e8">
            <SideCaret />
            <HeadTitle>Custom Filter Expression</HeadTitle>
          </CustomHead>
          <ApplyRow><ApplyBtn>Apply</ApplyBtn></ApplyRow>
        </RightPanel>
      </Main>

      <Footer>
        <span>About TIBCO JasperReports Server</span>
        <span>Copyright © 2005-2015 TIBCO Software Inc.</span>
      </Footer>

      <Taskbar>
        <StartBtn><WinLogo /></StartBtn>
        <TaskSearch>Search the web and Windows</TaskSearch>
        <TaskItem><TaskViewIcon /></TaskItem>
        <TaskItem $open><ExplorerIcon /></TaskItem>
        <TaskItem><EdgeIcon /></TaskItem>
        <TaskItem><BracketApp /></TaskItem>
        <TaskItem $open><SkypeIcon /></TaskItem>
        <TaskItem $open><PdfIcon /></TaskItem>
        <TaskItem $open $active><ChromeIcon /></TaskItem>
        <TaskItem $open $left={38}><PptIcon /></TaskItem>
        <Tray>
          <TrayIcon $w={32}><ChevronUp size={17} /></TrayIcon>
          <TrayIcon $w={33}><BatteryIcon /></TrayIcon>
          <TrayIcon $w={33}><WifiIcon /></TrayIcon>
          <TrayIcon $w={30}><MuteIcon /></TrayIcon>
          <TrayIcon $w={35}><NoticeIcon /></TrayIcon>
          <TrayIcon $w={35}><KeyboardIcon /></TrayIcon>
          <Clock>6:54 PM<br />3/3/2016</Clock>
        </Tray>
      </Taskbar>
    </Page>
  );
}
